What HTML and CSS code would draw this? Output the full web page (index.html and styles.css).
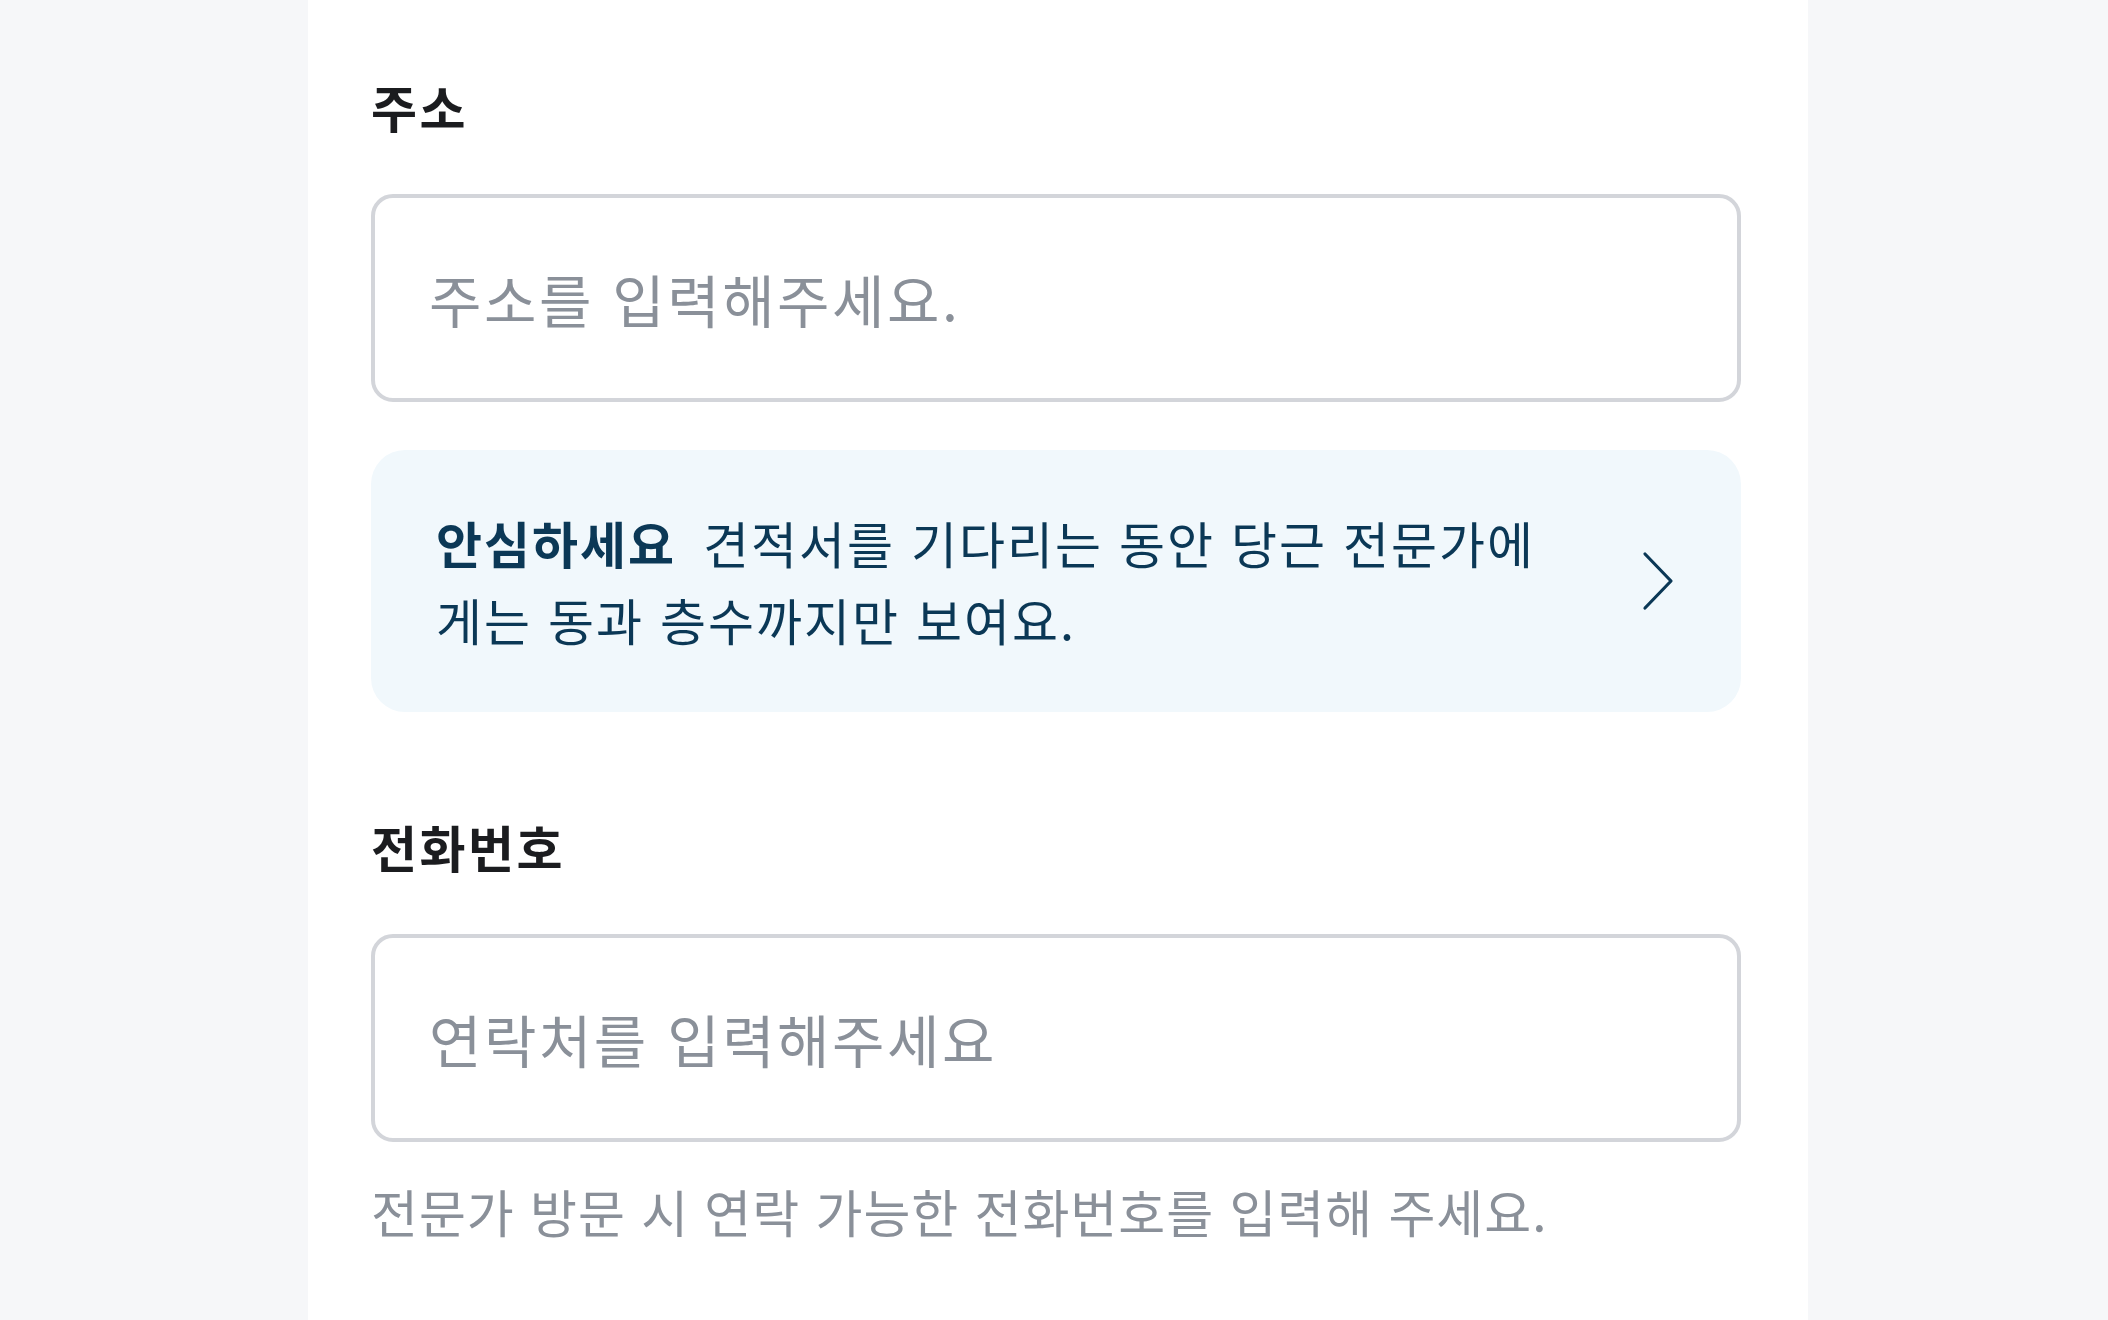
FILE: index.html
```html
<!DOCTYPE html>
<html lang="ko">
<head>
    <meta charset="UTF-8">
    <meta name="viewport" content="width=device-width, initial-scale=1.0">
    <title>주소 입력</title>
    <link rel="stylesheet" href="styles.css">
</head>
<body>
    <div class="panel">
        <label class="field_label" for="address">주소</label>
        <input type="text" id="address" class="field_input" placeholder="주소를 입력해주세요.">

        <div class="notice">
            <p class="notice_text"><strong>안심하세요</strong> 견적서를 기다리는 동안 당근 전문가에게는 동과 층수까지만 보여요.</p>
            <svg class="notice_arrow" width="34" height="60" viewBox="0 0 34 60">
                <path d="M4 3 L30 30 L4 57" fill="none" stroke="#0b3856" stroke-width="3.2" stroke-linecap="round" stroke-linejoin="round"/>
            </svg>
        </div>

        <label class="field_label phone_label" for="phone">전화번호</label>
        <input type="tel" id="phone" class="field_input" placeholder="연락처를 입력해주세요">
        <p class="help_text">전문가 방문 시 연락 가능한 전화번호를 입력해 주세요.</p>
    </div>
</body>
</html>
```

FILE: styles.css
```css
*{
    box-sizing: border-box;
}
html, body{
    height: 100%;
}
body{
    margin: 0;
    background-color: #f6f7f9;
    font-family: "Noto Sans CJK KR", "Noto Sans", sans-serif;
}
.panel{
    width: 1500px;
    min-height: 100%;
    margin-left: 308px;
    background-color: #ffffff;
    padding: 74px 67px 0 63px;
    display: flex;
    flex-direction: column;
    align-items: stretch;
}
.field_label{
    display: block;
    font-size: 50px;
    font-weight: 700;
    line-height: 64px;
    color: #1b1c1f;
    letter-spacing: 2.5px;
}
.phone_label{
    margin-top: 102px;
}
.field_input{
    display: block;
    width: 100%;
    height: 208px;
    margin-top: 56px;
    padding: 0 54px;
    border: 4px solid #d3d5da;
    border-radius: 22px;
    background-color: #ffffff;
    font-family: inherit;
    font-size: 57px;
    letter-spacing: 2.5px;
    color: #1b1c1f;
    outline: none;
}
.field_input::placeholder{
    color: #8a9099;
}
.notice{
    margin-top: 48px;
    background-color: #f1f8fc;
    border-radius: 34px;
    padding: 54px 66px 54px 65px;
    display: flex;
    align-items: center;
    justify-content: space-between;
}
.notice_text{
    margin: 0;
    max-width: 1125px;
    font-size: 50px;
    line-height: 77px;
    letter-spacing: 2px;
    color: #0b3856;
}
.notice_text strong{
    font-weight: 700;
    margin-right: 11px;
}
.notice_arrow{
    flex-shrink: 0;
    display: block;
}
.help_text{
    margin: 37px 0 0;
    font-size: 51px;
    line-height: 64px;
    letter-spacing: 1px;
    color: #8a9099;
}
```
